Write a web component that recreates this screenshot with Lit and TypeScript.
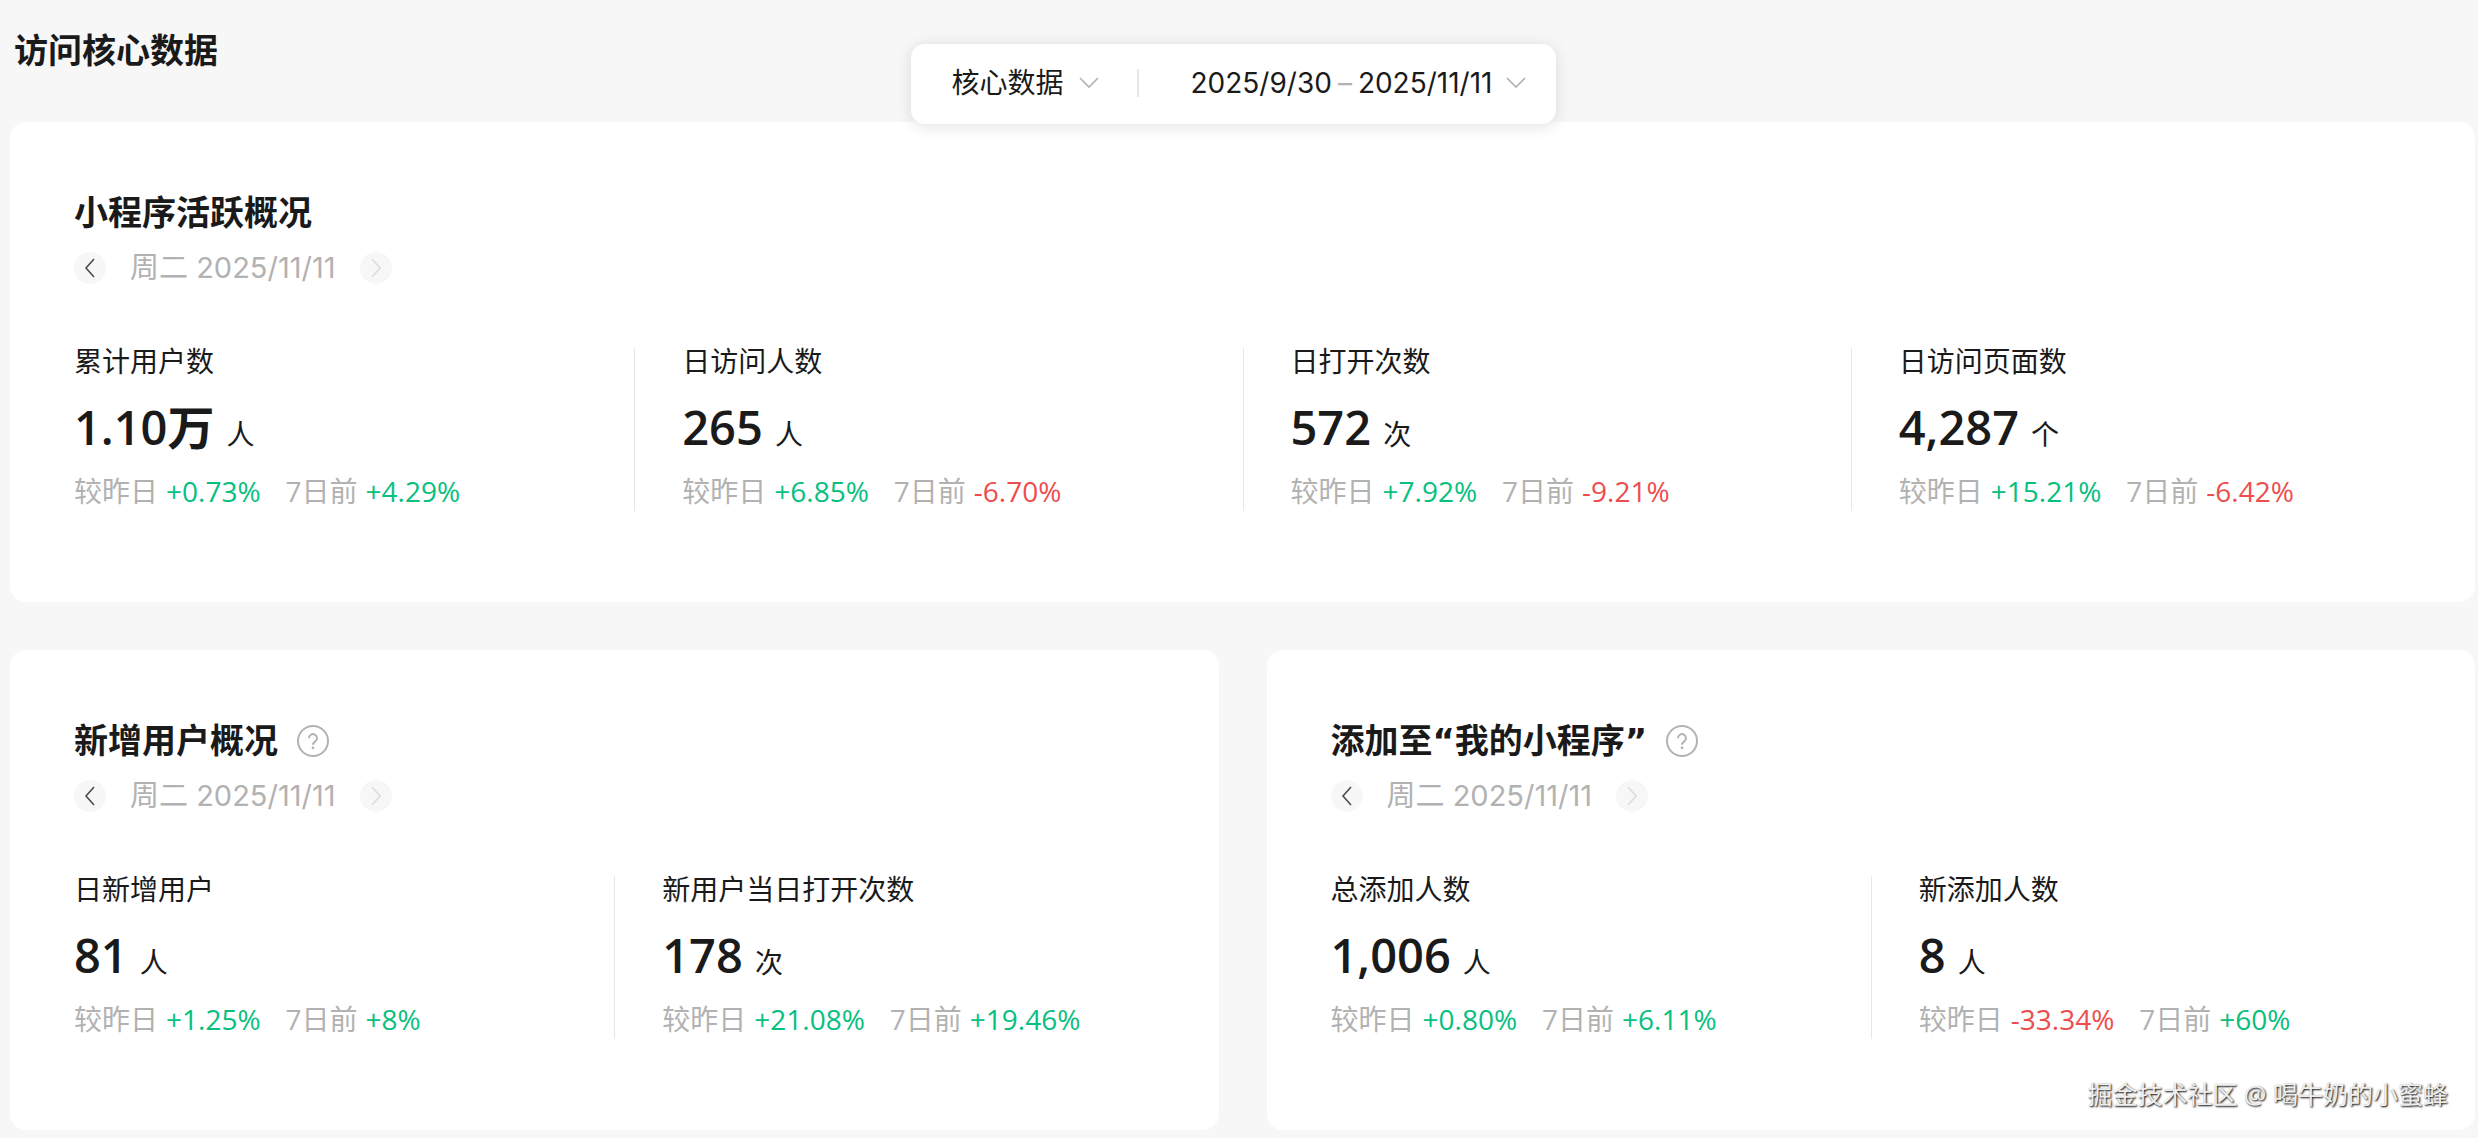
import { LitElement, html, css, svg, nothing } from "lit";
import { customElement, property } from "lit/decorators.js";

interface Stat {
  label: string;
  value: string;
  unit: string;
  day: string;
  week: string;
}

const chevron = (points: string, w: number, h: number) => html`
  <svg class="chevron" width=${w} height=${h} viewBox="0 0 ${w} ${h}" fill="none"
    stroke="currentColor" stroke-width="1.6" aria-hidden="true">
    ${svg`<polyline points=${points} />`}
  </svg>`;

const left = () => chevron("10,1 2,10 10,19", 12, 20);
const right = () => chevron("2,1 10,10 2,19", 12, 20);
const down = () => chevron("1,1 10,10 19,1", 20, 12);

@customElement("stat-item")
export class StatItem extends LitElement {
  @property({ attribute: false }) stat!: Stat;

  static styles = css`
    :host { display: block; }
    .label { font-size: 28px; line-height: 26px; }
    .value { display: flex; align-items: baseline; gap: 12px; margin-top: 25px; line-height: 56px; }
    .number { font-size: 47px; font-weight: 600; }
    .unit { font-size: 28px; }
    .trend { display: flex; gap: 25px; margin-top: 9px; font-size: 28px; line-height: 40px; color: #b2b2b2; }
    .pair { display: flex; gap: 8px; white-space: nowrap; }
    .up { color: #07c07e; }
    .down { color: #ee4d4d; }
  `;

  private trend(name: string, change: string) {
    return html`<span class="pair"><span>${name}</span><span class=${change.startsWith("-") ? "down" : "up"}>${change}</span></span>`;
  }

  render() {
    const s = this.stat;
    return html`
      <div class="label">${s.label}</div>
      <div class="value"><span class="number">${s.value}</span><span class="unit">${s.unit}</span></div>
      <div class="trend">${this.trend("较昨日", s.day)}${this.trend("7日前", s.week)}</div>`;
  }
}

@customElement("stat-card")
export class StatCard extends LitElement {
  @property() heading = "";
  @property() date = "";
  @property({ type: Boolean }) help = false;
  @property({ attribute: false }) stats: Stat[] = [];

  static styles = css`
    :host { display: block; min-width: 0; padding: 67px 16px 91px; border-radius: 16px; background: #fff; }
    .top { display: flex; align-items: center; gap: 19px; padding-left: 48px; }
    h2 { margin: 0; font-family: "DejaVu Sans", "Noto Sans CJK SC", sans-serif; font-size: 34px; line-height: 48px; font-weight: 600; }
    button { display: flex; align-items: center; justify-content: center; width: 32px; height: 32px; padding: 0; border: 0; border-radius: 50%; background: none; color: #b2b2b2; cursor: pointer; }
    .day { display: flex; align-items: center; gap: 24px; margin-top: 15px; padding-left: 48px; font-family: Inter, "Noto Sans CJK SC", sans-serif; font-size: 29px; line-height: 32px; color: #b2b2b2; }
    .step { background: #f7f7f7; color: #4c4c4c; }
    .step:disabled { color: #dcdcdc; cursor: default; }
    .stats { display: flex; margin-top: 64px; }
    .stat { flex: 1; min-width: 0; padding-left: 47px; border-left: 1px solid #e7e7e7; }
    .stat:first-child { border-color: transparent; }
  `;

  render() {
    return html`
      <div class="top">
        <h2>${this.heading}</h2>
        ${this.help
          ? html`<button aria-label="说明">
              <svg width="32" height="32" viewBox="0 0 32 32" fill="none" stroke="currentColor" stroke-width="2" aria-hidden="true">
                <circle cx="16" cy="16" r="15" />
                <path d="M12 13.200a4 4 0 1 1 6.300 3.200c-1.500 1.100-2.300 1.700-2.300 3.400" />
                <circle cx="16" cy="22.800" r="1.400" fill="currentColor" stroke="none" />
              </svg>
            </button>`
          : nothing}
      </div>
      <div class="day">
        <button class="step" aria-label="前一天">${left()}</button>
        <span>${this.date}</span>
        <button class="step" aria-label="后一天" disabled>${right()}</button>
      </div>
      <div class="stats">
        ${this.stats.map((s) => html`<stat-item class="stat" .stat=${s}></stat-item>`)}
      </div>`;
  }
}

const active: Stat[] = [
  { label: "累计用户数", value: "1.10万", unit: "人", day: "+0.73%", week: "+4.29%" },
  { label: "日访问人数", value: "265", unit: "人", day: "+6.85%", week: "-6.70%" },
  { label: "日打开次数", value: "572", unit: "次", day: "+7.92%", week: "-9.21%" },
  { label: "日访问页面数", value: "4,287", unit: "个", day: "+15.21%", week: "-6.42%" },
];
const fresh: Stat[] = [
  { label: "日新增用户", value: "81", unit: "人", day: "+1.25%", week: "+8%" },
  { label: "新用户当日打开次数", value: "178", unit: "次", day: "+21.08%", week: "+19.46%" },
];
const added: Stat[] = [
  { label: "总添加人数", value: "1,006", unit: "人", day: "+0.80%", week: "+6.11%" },
  { label: "新添加人数", value: "8", unit: "人", day: "-33.34%", week: "+60%" },
];

@customElement("app-root")
export class AppRoot extends LitElement {
  static styles = css`
    :host { display: block; position: relative; box-sizing: border-box; min-height: 100vh; padding: 0 3px 9px 10px; background: #f7f7f7; color: #1a1a1a; font-family: "Open Sans", "Noto Sans CJK SC", sans-serif; }
    h1 { margin: 0; padding: 26px 4px 48px; font-size: 34px; line-height: 48px; font-weight: 600; }
    .filters { position: absolute; top: 44px; left: 0; right: 11px; display: flex; align-items: center; box-sizing: border-box; width: fit-content; height: 80px; margin: 0 auto; padding: 0 30px 3px 41px; border-radius: 14px; background: #fff; box-shadow: 0 2px 16px rgba(0, 0, 0, 0.12); font-family: Inter, "Noto Sans CJK SC", sans-serif; font-size: 28px; }
    .field { display: flex; align-items: center; gap: 14px; padding: 0; border: 0; background: none; color: inherit; font: inherit; line-height: 40px; cursor: pointer; }
    select { appearance: none; padding: 0; border: 0; background: none; color: inherit; font: inherit; line-height: 40px; cursor: pointer; }
    .chevron { color: #b2b2b2; pointer-events: none; }
    .rule { width: 2px; height: 28px; margin: 0 52px 0 38px; background: #e7e7e7; }
    .range { display: flex; gap: 6px; }
    .dash { color: #b2b2b2; }
    main { display: grid; grid-template-columns: 1fr 1fr; gap: 48px; }
    .wide { grid-column: 1 / -1; }
    .mark { position: absolute; right: 30px; bottom: 27px; font-size: 25px; line-height: 36px; color: #eee; text-shadow: 1px 1px 2px #000; white-space: nowrap; }
  `;

  render() {
    const date = "周二 2025/11/11";
    return html`
      <h1>访问核心数据</h1>
      <main>
        <stat-card class="wide" heading="小程序活跃概况" date=${date} .stats=${active}></stat-card>
        <stat-card heading="新增用户概况" date=${date} help .stats=${fresh}></stat-card>
        <stat-card heading="添加至“我的小程序”" date=${date} help .stats=${added}></stat-card>
      </main>
      <div class="filters">
        <label class="field">
          <select aria-label="数据类型"><option>核心数据</option></select>
          ${down()}
        </label>
        <span class="rule"></span>
        <button class="field">
          <span class="range"><span>2025/9/30</span><span class="dash">–</span><span>2025/11/11</span></span>
          ${down()}
        </button>
      </div>
      <div class="mark">掘金技术社区 @ 喝牛奶的小蜜蜂</div>`;
  }
}
